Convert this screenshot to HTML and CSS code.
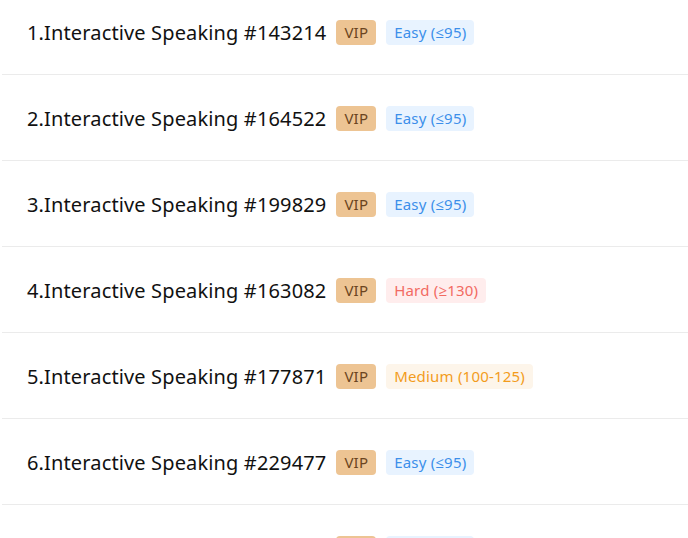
FILE: index.html
```html
<!DOCTYPE html>
<html lang="en">
<head>
  <meta charset="UTF-8">
  <title>Interactive Speaking</title>
  <link rel="stylesheet" href="styles.css">
</head>
<body>
  <ul class="question-list">
    <li class="question-item"><span class="question-title">1.Interactive Speaking #143214</span><span class="tag tag-vip">VIP</span><span class="tag tag-easy">Easy (≤95)</span></li>
    <li class="question-item"><span class="question-title">2.Interactive Speaking #164522</span><span class="tag tag-vip">VIP</span><span class="tag tag-easy">Easy (≤95)</span></li>
    <li class="question-item"><span class="question-title">3.Interactive Speaking #199829</span><span class="tag tag-vip">VIP</span><span class="tag tag-easy">Easy (≤95)</span></li>
    <li class="question-item"><span class="question-title">4.Interactive Speaking #163082</span><span class="tag tag-vip">VIP</span><span class="tag tag-hard">Hard (≥130)</span></li>
    <li class="question-item"><span class="question-title">5.Interactive Speaking #177871</span><span class="tag tag-vip">VIP</span><span class="tag tag-medium">Medium (100-125)</span></li>
    <li class="question-item"><span class="question-title">6.Interactive Speaking #229477</span><span class="tag tag-vip">VIP</span><span class="tag tag-easy">Easy (≤95)</span></li>
    <li class="question-item"><span class="question-title">7.Interactive Speaking #218406</span><span class="tag tag-vip">VIP</span><span class="tag tag-easy">Easy (≤95)</span></li>
  </ul>
</body>
</html>
```

FILE: styles.css
```css
body {
  margin: 0;
  background-color: #fff;
  font-family: "Noto Sans", "Open Sans", sans-serif;
  overflow: hidden;
}
.question-list {
  list-style: none;
  margin: 0 0 0 2px;
  padding: 0;
}
.question-item {
  display: flex;
  align-items: center;
  height: 24px;
  padding: 31px 0 30px 25px;
  border-bottom: 1px solid #ebebeb;
}
.question-item:first-child {
  padding-top: 20px;
}
.question-title {
  font-size: 20px;
  letter-spacing: 0.14px;
  color: #111;
  margin-right: 10px;
}
.tag {
  display: inline-flex;
  align-items: center;
  height: 25px;
  padding: 0 8px;
  margin-right: 10px;
  border-radius: 4px;
  font-size: 15px;
  letter-spacing: 0.2px;
}
.tag-vip {
  background-color: #edc493;
  color: #6b4421;
}
.tag-easy {
  background-color: #e8f3ff;
  color: #3c8fea;
}
.tag-hard {
  background-color: #ffeded;
  color: #f26a62;
}
.tag-medium {
  background-color: #fdf5ea;
  color: #f39c1c;
}
```
